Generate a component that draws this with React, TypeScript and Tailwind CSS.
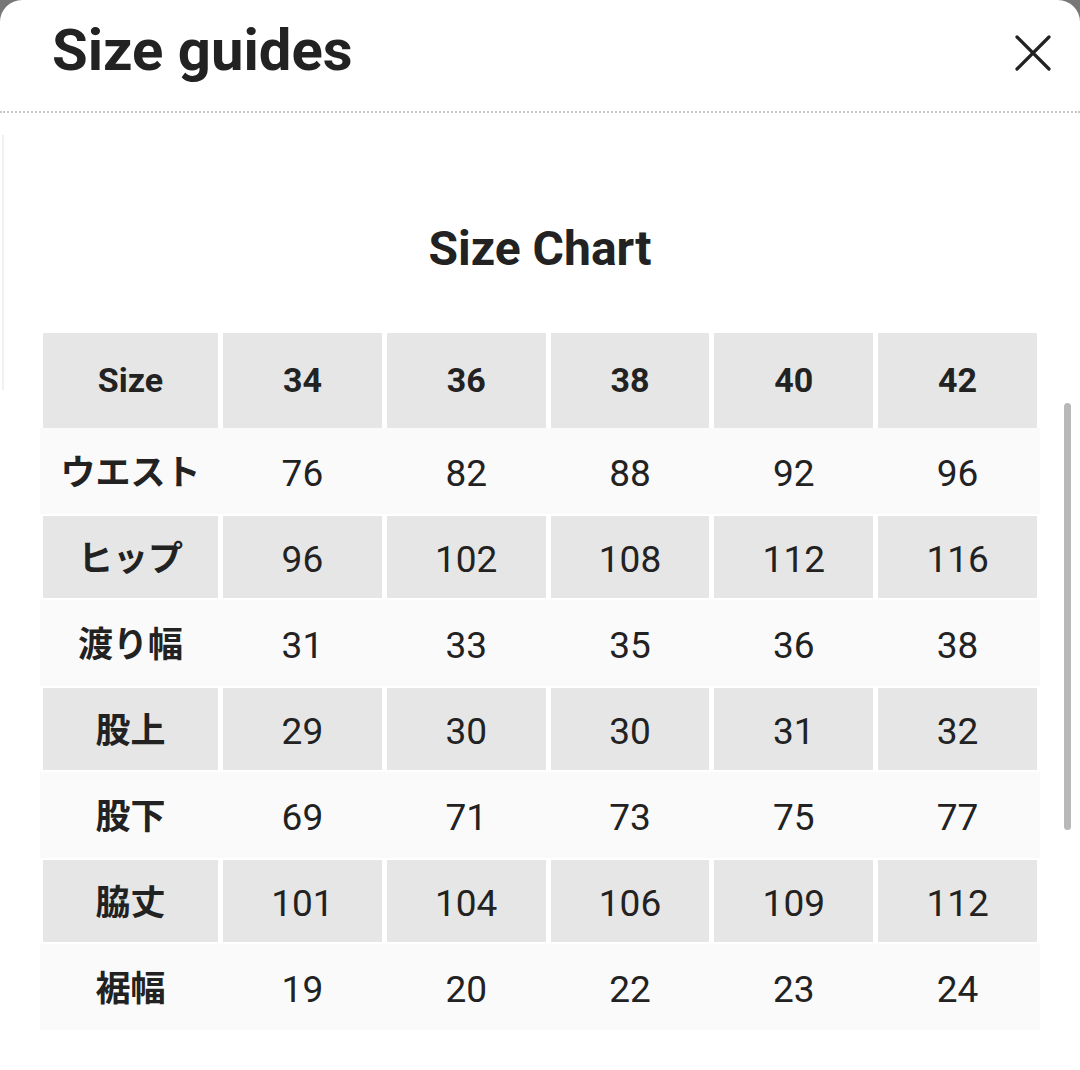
import React from "react";

const sizes = ["34", "36", "38", "40", "42"];

const rows: { label: string; values: string[] }[] = [
  { label: "ウエスト", values: ["76", "82", "88", "92", "96"] },
  { label: "ヒップ", values: ["96", "102", "108", "112", "116"] },
  { label: "渡り幅", values: ["31", "33", "35", "36", "38"] },
  { label: "股上", values: ["29", "30", "30", "31", "32"] },
  { label: "股下", values: ["69", "71", "73", "75", "77"] },
  { label: "脇丈", values: ["101", "104", "106", "109", "112"] },
  { label: "裾幅", values: ["19", "20", "22", "23", "24"] },
];

const font = { fontFamily: 'Roboto, "Noto Sans CJK JP", sans-serif' };

export default function App() {
  return (
    <div className="w-[1080px] h-[1070px] bg-[#777] overflow-hidden" style={font}>
      <div className="relative w-full h-full bg-white rounded-t-[22px] text-[#222]">
        {/* header */}
        <div className="flex items-center justify-between h-[113px] pl-[52px] pr-[28px] border-b-2 border-dotted border-[#c8c8c8]">
          <h1 className="text-[58px] font-bold leading-none -mt-[12px]">Size guides</h1>
          <button className="-mt-[6px] text-[#222]">
            <svg width="38" height="38" viewBox="0 0 38 38" fill="none" stroke="currentColor" strokeWidth="3.2" strokeLinecap="round">
              <path d="M3 3L35 35M35 3L3 35" />
            </svg>
          </button>
        </div>

        {/* faint edge of the page behind */}
        <div className="absolute left-[2px] top-[135px] w-[2px] h-[255px] bg-[#f0f0f0]" />

        {/* body */}
        <div className="pt-[112px]">
          <h2 className="text-center text-[48px] font-bold leading-[48px]">Size Chart</h2>

          <div className="ml-[40px] mt-[60px] w-[1000px] flex flex-col">
            <div className="grid grid-cols-[175px_repeat(5,1fr)] gap-x-[5px] px-[3px]">
              <div className="h-[95px] bg-[#e6e6e6] flex items-center justify-center text-[34px] font-bold">Size</div>
              {sizes.map((s) => (
                <div key={s} className="h-[95px] bg-[#e6e6e6] flex items-center justify-center text-[34px] font-bold">
                  {s}
                </div>
              ))}
            </div>

            {rows.map((r, i) =>
              i % 2 === 0 ? (
                <div key={r.label} className="grid grid-cols-[175px_repeat(5,1fr)] gap-x-[5px] px-[3px] h-[86px] bg-[#fafafa] pt-[6px]">
                  <div className="flex items-center justify-center text-[35px] font-bold">{r.label}</div>
                  {r.values.map((v, j) => (
                    <div key={j} className="flex items-center justify-center text-[37px]">{v}</div>
                  ))}
                </div>
              ) : (
                <div key={r.label} className="grid grid-cols-[175px_repeat(5,1fr)] gap-x-[5px] px-[3px] py-[2px]">
                  <div className="h-[82px] bg-[#e6e6e6] flex items-center justify-center text-[35px] font-bold pt-[6px]">{r.label}</div>
                  {r.values.map((v, j) => (
                    <div key={j} className="h-[82px] bg-[#e6e6e6] flex items-center justify-center text-[37px] pt-[6px]">{v}</div>
                  ))}
                </div>
              )
            )}
          </div>
        </div>

        {/* scrollbar */}
        <div className="absolute left-[1064px] top-[403px] w-[7px] h-[427px] rounded-full bg-[#b8b8b8]" />
      </div>
    </div>
  );
}
